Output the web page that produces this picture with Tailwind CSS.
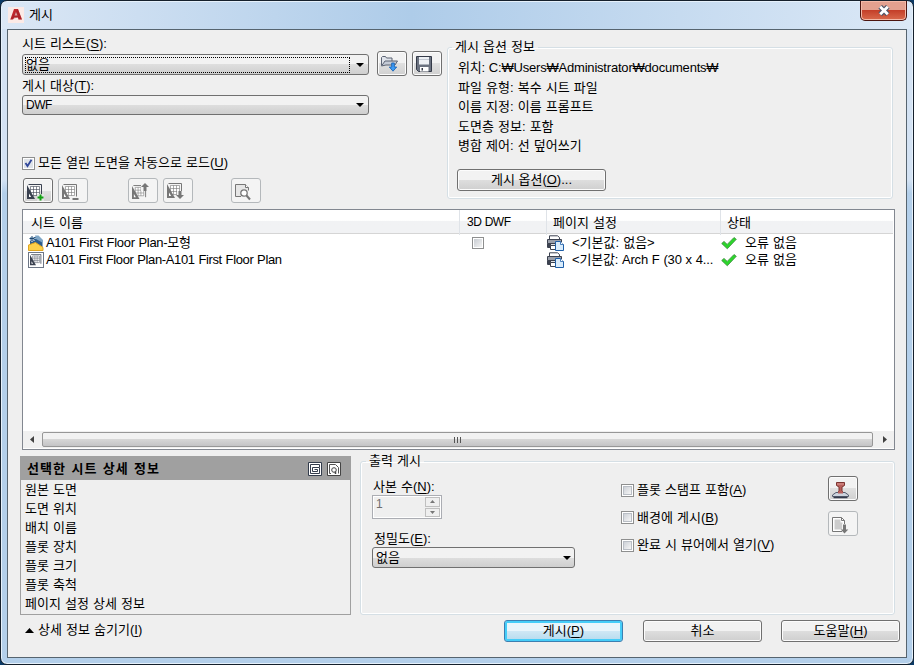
<!DOCTYPE html>
<html lang="ko">
<head>
    <meta charset="UTF-8">
    <meta name="viewport" content="width=device-width, initial-scale=1.0">
    <title>게시</title>
    <script src="https://cdn.jsdelivr.net/npm/@tailwindcss/browser@4"></script>
    <style>
        body {
            font-family: 'Liberation Sans', 'Noto Sans CJK KR', sans-serif;
            word-spacing: 0.5px;
        }
        u {
            text-underline-offset: 2px;
            text-decoration-thickness: 1px;
        }
    </style>
</head>
<body class="w-[914px] h-[665px] overflow-hidden bg-[#0b3a66] text-[13px] leading-4 text-black whitespace-nowrap">
    <!-- Shared icons -->
    <svg class="hidden">
        <symbol id="sheet" viewBox="0 0 16 16">
            <path d="M1.500.500h13V13" fill="none" stroke="currentColor" />
            <path d="M3.500 2.500h9v9h-9z" fill="#fff" stroke="currentColor" stroke-width=".6" />
            <path d="M6.500 2.500v9M9.500 2.500v9M3.500 5.500h9M3.500 8.500h9" fill="none" stroke="currentColor" stroke-width=".6" />
            <path d="M0 1v14h8z" fill="currentColor" />
            <path d="M2 9.500v3.500h2.200z" fill="#fff" />
        </symbol>
        <symbol id="printer" viewBox="0 0 17 16">
            <path d="M2.500 5V.8h8l2 1.700V5" fill="#fff" stroke="#3c4250" />
            <path d="M.500 4.500h14v4H.500z" fill="#9a9faa" stroke="#3c4250" />
            <path d="M.500 8.500h12v4H.500z" fill="#dfe2e7" stroke="#3c4250" />
            <path d="M1 9h3v3H1z" fill="#3c4250" />
            <path d="M3.500 10.500h6v4h-6z" fill="#fff" stroke="#3c4250" />
            <path d="M8.500 6.500h5l3 3v6h-8z" fill="#d9ecfc" stroke="#1f5fa8" />
            <path d="M13.500 6.500v3h3" fill="#fff" stroke="#1f5fa8" stroke-width=".8" />
        </symbol>
        <symbol id="tick" viewBox="0 0 16 14">
            <path d="M.7 7.500L3 5.400l3.200 3L13 1.500l2.300 1.800L6.300 12.800z" fill="#2bd62b" stroke="#3c8a3c" stroke-width=".8" />
        </symbol>
        <symbol id="caret" viewBox="0 0 8 4">
            <path d="M0 0h8L4 4z" fill="#000" />
        </symbol>
    </svg>

    <div class="w-full h-full flex flex-col rounded-[7px] border border-[#15202c] bg-gradient-to-b from-[#d3e2f3] from-27% to-[#b3cfea] to-29% shadow-[inset_0_0_0_1px_#e6f1fb] overflow-hidden">
        <!-- Title bar -->
        <header class="h-[27px] shrink-0 m-px mb-0 flex items-start bg-gradient-to-r from-[#dbe7f5] via-[#aecce9] via-45% to-[#dbe8f6]">
            <div class="mt-[5px] ml-[6px] w-4 h-4 bg-[#fbeae6]">
                <svg class="w-4 h-4" viewBox="0 0 16 16">
                    <path d="M6 2h4l4 10.500h-3.500L10 10.500H6.300L5 12.500H2.300z" fill="#c0272d" />
                    <path d="M8 5l1.500 3.500h-3z" fill="#fbeae6" />
                    <path d="M2.300 12.500L10 10.500l.5 2H14L10 2z" fill="#8f1a20" opacity=".35" />
                </svg>
            </div>
            <h1 class="mt-[4px] ml-[5px] leading-[17px]">게시</h1>
            <button class="ml-auto mr-[5px] -mt-px w-[47px] h-[20px] flex items-center justify-center rounded-b-[5px] border border-t-0 border-[#4b1510] bg-gradient-to-b from-[#e3a08f] from-45% via-[#c43f29] via-50% to-[#d9694c] shadow-[inset_0_0_0_1px_#f3b9a8]">
                <svg class="w-[12px] h-[11px]" viewBox="0 0 11 10">
                    <path d="M2 1.500l7 7M9 1.500l-7 7" stroke="#4a5468" stroke-width="4.600" />
                    <path d="M2 1.500l7 7M9 1.500l-7 7" stroke="#fff" stroke-width="2.600" />
                </svg>
            </button>
        </header>

        <!-- Client area -->
        <main class="mx-[6px] h-[629px] shrink-0 border border-[#56646f] bg-[#efefef] pl-[14px] flex flex-col">
            <section class="h-[179px] flex">
                <div class="w-[425px]">
                    <label class="block pt-[6px] leading-[15px]">시트 리스트(<u>S</u>):</label>
                    <div class="h-[25px] flex items-center">
                        <div class="mt-[2px] w-[347px] h-[21px] flex items-center rounded-[3px] border border-[#707070] bg-gradient-to-b from-[#f2f2f2] from-50% via-[#dedede] via-50% to-[#cfcfcf] p-[2px]">
                            <span class="flex-1 h-[16px] border border-dotted border-black leading-[13px]">없음</span>
                            <svg class="w-[8px] h-[4px] ml-[6px] mr-[2px]"><use href="#caret" /></svg>
                        </div>
                        <button class="ml-[8px] w-[30px] h-[25px] pl-[3px] flex items-center rounded-[3px] border border-[#707070] bg-gradient-to-b from-[#f2f2f2] from-50% via-[#e0e0e0] via-50% to-[#d0d0d0] shadow-[inset_0_0_0_1px_#fcfcfc]">
                            <svg class="w-[18px] h-[17px]" viewBox="0 0 18 17">
                                <path d="M.500 10.500V2.500l1-1h3l1 1.500h5.500v3" fill="#dfe3ea" stroke="#5b6373" />
                                <path d="M.500 11l3.500-5h12.500l-2.500 4H5z" fill="#c5cbd6" stroke="#5b6373" />
                                <path d="M10.700 8h2.600v4h2.400L12 16.200 8.300 12h2.400z" fill="#3d9bf5" stroke="#0f5cb0" stroke-width=".8" />
                            </svg>
                        </button>
                        <button class="ml-[5px] w-[30px] h-[25px] pl-[3px] flex items-center rounded-[3px] border border-[#707070] bg-gradient-to-b from-[#f2f2f2] from-50% via-[#e0e0e0] via-50% to-[#d0d0d0] shadow-[inset_0_0_0_1px_#fcfcfc]">
                            <svg class="w-4 h-4" viewBox="0 0 16 16">
                                <path d="M.500.500h15v15h-13l-2-2z" fill="#6b7280" stroke="#343a48" />
                                <path d="M3 1h10v7.500H3z" fill="#eef1f5" />
                                <path d="M3 3.500h10" stroke="#c3c9d3" />
                                <path d="M4 11h8.500v4.500H4z" fill="#fff" />
                                <path d="M5.500 12h1.500v2.500H5.500z" fill="#343a48" />
                            </svg>
                        </button>
                    </div>
                    <label class="block mt-[2px]">게시 대상(<u>T</u>):</label>
                    <div class="mt-px w-[347px] h-[20px] flex items-center justify-between rounded-[3px] border border-[#707070] bg-gradient-to-b from-[#f2f2f2] from-50% via-[#dedede] via-50% to-[#cfcfcf] pl-[3px] pr-[4px]">
                        <span class="text-[12px] tracking-[-0.5px]">DWF</span>
                        <svg class="w-[8px] h-[4px]"><use href="#caret" /></svg>
                    </div>
                    <label class="mt-[40px] flex items-center">
                        <span class="w-[13px] h-[13px] mr-[3px] border border-[#8e8f8f] bg-white p-px">
                            <svg class="w-[9px] h-[9px] bg-[#dfe3e8]" viewBox="0 0 9 9">
                                <path d="M1.500 4l2 3L7.500.800" fill="none" stroke="#31479a" stroke-width="1.800" />
                            </svg>
                        </span>
                        <span>모든 열린 도면을 자동으로 로드(<u>U</u>)</span>
                    </label>
                    <div class="mt-[7px] ml-px flex">
                        <button class="w-[30px] h-[25px] pl-[3px] pt-[3px] rounded-[3px] border border-[#707070] bg-gradient-to-b from-[#f2f2f2] from-50% via-[#e0e0e0] via-50% to-[#d0d0d0] shadow-[inset_0_0_0_1px_#fcfcfc]">
                            <svg class="w-[18px] h-[17px] text-[#3a4150]" viewBox="0 0 18 17">
                                <use href="#sheet" width="16" height="16" />
                                <path d="M10 10h7v7h-7z" fill="#e4e4e4" />
                                <path d="M13.500 10.500v6M10.500 13.500h6" stroke="#12a012" stroke-width="2" />
                            </svg>
                        </button>
                        <button class="ml-[5px] w-[30px] h-[25px] pl-[3px] pt-[3px] rounded-[3px] border border-[#b4b8bb] bg-[#f4f4f4]">
                            <svg class="w-[18px] h-[17px] text-[#777]" viewBox="0 0 18 17">
                                <use href="#sheet" width="16" height="16" />
                                <path d="M9 14.500h8" stroke="#f4f4f4" stroke-width="4" />
                                <path d="M10.500 15h6" stroke="#777" stroke-width="2" />
                            </svg>
                        </button>
                        <button class="ml-[40px] w-[30px] h-[25px] pl-[3px] pt-[3px] rounded-[3px] border border-[#b4b8bb] bg-[#f4f4f4]">
                            <svg class="w-[18px] h-[18px] text-[#777]" viewBox="0 0 18 18">
                                <use href="#sheet" y="2" width="15" height="15" />
                                <path d="M9 0h8v8H9z" fill="#f4f4f4" />
                                <path d="M13 0l4 4h-2.500v4h-3V4H9z" fill="#777" />
                            </svg>
                        </button>
                        <button class="ml-[5px] w-[30px] h-[25px] pl-[3px] pt-[3px] rounded-[3px] border border-[#b4b8bb] bg-[#f4f4f4]">
                            <svg class="w-[18px] h-[18px] text-[#777]" viewBox="0 0 18 18">
                                <use href="#sheet" width="16" height="16" />
                                <path d="M10 8h7v8h-7z" fill="#f4f4f4" />
                                <path d="M13 16l4-4h-2.500V8h-3v4H9z" fill="#777" />
                            </svg>
                        </button>
                        <button class="ml-[38px] w-[30px] h-[25px] pl-[3px] pt-[3px] rounded-[3px] border border-[#b4b8bb] bg-[#f4f4f4]">
                            <svg class="w-[17px] h-[17px]" viewBox="0 0 17 17">
                                <path d="M6 12.500H.500V.500h10l3 3v3" fill="#e6e6e6" stroke="#777" />
                                <path d="M10.500.500v3h3" fill="#fff" stroke="#777" />
                                <circle cx="9" cy="9" r="3.200" fill="#fff" stroke="#777" stroke-width="1.300" />
                                <path d="M11.500 11.500l3.500 4" stroke="#777" stroke-width="2" />
                            </svg>
                        </button>
                    </div>
                </div>

                <fieldset class="mt-[9px] w-[446px] h-[160px] rounded-[3px] border border-[#d5dfe5] shadow-[inset_0_0_0_1px_#fff]">
                    <legend class="ml-[4px] px-[3px]">게시 옵션 정보</legend>
                    <div class="pl-[10px] mt-[3px] leading-[19.500px]">
                        <p class="tracking-[-0.2px]">위치: C:₩Users₩Administrator₩documents₩</p>
                        <p>파일 유형: 복수 시트 파일</p>
                        <p>이름 지정: 이름 프롬프트</p>
                        <p>도면층 정보: 포함</p>
                        <p>병합 제어: 선 덮어쓰기</p>
                    </div>
                    <button class="mt-[13px] ml-[9px] w-[149px] h-[22px] rounded-[3px] border border-[#707070] bg-gradient-to-b from-[#f2f2f2] from-50% via-[#dedede] via-50% to-[#cfcfcf] shadow-[inset_0_0_0_1px_#fcfcfc]">게시 옵션(<u>O</u>)...</button>
                </fieldset>
            </section>

            <!-- Sheet list -->
            <section class="w-[873px] h-[241px] flex flex-col border border-[#828790] bg-white">
                <div class="h-[24px] mr-px grid grid-cols-[437px_87px_174px_1fr] leading-[25px] border-b border-[#d5d5d5] bg-gradient-to-b from-white from-45% to-[#f1f2f4] to-50%">
                    <div class="pl-[8px] border-r border-[#dfe3e8]">시트 이름</div>
                    <div class="pl-[7px] border-r border-[#dfe3e8] text-[12px] tracking-[-0.5px]">3D DWF</div>
                    <div class="pl-[6px] border-r border-[#dfe3e8]">페이지 설정</div>
                    <div class="pl-[6px]">상태</div>
                </div>
                <div class="flex-1">
                    <div class="h-[17px] grid grid-cols-[437px_87px_174px_1fr]">
                        <div class="pl-[5px] flex items-center">
                            <svg class="w-4 h-4 mr-[2px] mt-px" viewBox="0 0 16 16">
                                <path d="M2 2h8l4.500 4v9H2z" fill="#2c5d8c" />
                                <path d="M7 .500h3.500l4.500 4.500v3L8 4z" fill="#7fa6c6" />
                                <path d="M4 0v7M.500 3.500h7M1.500 1l5 5M6.500 1l-5 5" stroke="#fff" />
                                <path d="M4 1v5M1.500 3.500h5" stroke="#1b4670" />
                                <path d="M.500 10l7-2.500 7.500 5v3H.500z" fill="#fbd04a" stroke="#e0a520" />
                            </svg>
                            <span class="tracking-[-0.3px]">A101 First Floor Plan-모형</span>
                        </div>
                        <div class="pl-[12px] flex items-center">
                            <span class="w-[12px] h-[12px] mt-px border border-[#8e8f8f] bg-white p-px"><span class="block w-full h-full bg-gradient-to-br from-[#c8ccd2] to-[#f4f4f4]"></span></span>
                        </div>
                        <div class="flex items-center">
                            <svg class="w-[17px] h-4 mr-[8px] mt-px"><use href="#printer" /></svg>
                            <span>&lt;기본값: 없음&gt;</span>
                        </div>
                        <div class="flex items-center">
                            <svg class="w-4 h-[14px] mr-[8px] mt-px"><use href="#tick" /></svg>
                            <span>오류 없음</span>
                        </div>
                    </div>
                    <div class="h-[17px] grid grid-cols-[437px_87px_174px_1fr]">
                        <div class="pl-[5px] flex items-center">
                            <span class="w-4 h-4 mr-[2px] mt-px border border-[#6d7686] p-px text-[#3a4150]"><svg class="w-3 h-3"><use href="#sheet" /></svg></span>
                            <span class="tracking-[-0.37px]">A101 First Floor Plan-A101 First Floor Plan</span>
                        </div>
                        <div></div>
                        <div class="flex items-center">
                            <svg class="w-[17px] h-4 mr-[8px] mt-px"><use href="#printer" /></svg>
                            <span class="tracking-[-0.2px]">&lt;기본값: Arch F (30 x 4...</span>
                        </div>
                        <div class="flex items-center">
                            <svg class="w-4 h-[14px] mr-[8px] mt-px"><use href="#tick" /></svg>
                            <span>오류 없음</span>
                        </div>
                    </div>
                </div>
                <div class="h-[17px] mb-px flex items-center bg-[#f0f0f0]">
                    <svg class="w-[4px] h-[7px] ml-[7px] mr-[8px]" viewBox="0 0 4 7"><path d="M4 0v7L0 3.500z" fill="#404040" /></svg>
                    <div class="w-[831px] h-[15px] flex items-center justify-center gap-[2px] rounded-[2px] border border-[#979797] bg-gradient-to-b from-[#f2f2f2] from-45% via-[#d6d6d6] via-50% to-[#c4c4c6]">
                        <i class="w-px h-[6px] bg-[#555]"></i>
                        <i class="w-px h-[6px] bg-[#555]"></i>
                        <i class="w-px h-[6px] bg-[#555]"></i>
                    </div>
                    <svg class="w-[4px] h-[7px] ml-[10px]" viewBox="0 0 4 7"><path d="M0 0v7l4-3.500z" fill="#404040" /></svg>
                </div>
            </section>

            <!-- Details and output -->
            <section class="h-[165px] flex">
                <div class="-ml-[2px] mt-[6px] w-[331px] h-[159px] border border-[#a0a0a0]">
                    <div class="h-[23px] pl-[6px] pr-[9px] flex items-center bg-[#a0a0a0]">
                        <h2 class="font-bold tracking-[1.1px]">선택한 시트 상세 정보</h2>
                        <svg class="ml-auto w-[14px] h-[14px]" viewBox="0 0 14 14">
                            <path d="M.500.500h13v13H.500z" fill="#fff" stroke="#333c4c" />
                            <path d="M11.500 5v-2.500h-9v9h9v-6h-7v4h5v-2h-3" fill="none" stroke="#333c4c" />
                        </svg>
                        <svg class="ml-[5px] w-[14px] h-[14px]" viewBox="0 0 14 14">
                            <path d="M.500.500h13v13H.500z" fill="#fff" stroke="#444" />
                            <path d="M4 11.500H2.500v-9h6l3 3v6" fill="none" stroke="#555" />
                            <circle cx="7" cy="8" r="2.300" fill="#fff" stroke="#444" />
                            <path d="M8.500 9.500v2.500" stroke="#444" stroke-width="1.500" />
                        </svg>
                    </div>
                    <ul class="pl-[4px] leading-[19px]">
                        <li>원본 도면</li>
                        <li>도면 위치</li>
                        <li>배치 이름</li>
                        <li>플롯 장치</li>
                        <li>플롯 크기</li>
                        <li>플롯 축척</li>
                        <li>페이지 설정 상세 정보</li>
                    </ul>
                </div>

                <fieldset class="ml-[9px] mt-[3px] w-[535px] h-[162px] rounded-[3px] border border-[#d5dfe5] shadow-[inset_0_0_0_1px_#fff]">
                    <legend class="ml-[5px] px-[3px]">출력 게시</legend>
                    <div class="flex">
                        <div class="ml-[11px] w-[249px] pt-[9px]">
                            <label class="block leading-[17px] pl-px">사본 수(<u>N</u>):</label>
                            <div class="w-[70px] h-[24px] flex border border-[#abadb3] bg-[#efefef] p-px shadow-[inset_0_0_0_1px_#fff]">
                                <span class="flex-1 pl-[2px] leading-[14px] text-[12px] text-[#6d6d6d]">1</span>
                                <div class="w-[15px] flex flex-col gap-px">
                                    <span class="flex-1 flex items-center justify-center border border-[#bfbfbf]"><svg class="w-[5px] h-[3px]" viewBox="0 0 5 3"><path d="M0 3h5L2.500 0z" fill="#777" /></svg></span>
                                    <span class="flex-1 flex items-center justify-center border border-[#bfbfbf]"><svg class="w-[5px] h-[3px]" viewBox="0 0 5 3"><path d="M0 0h5L2.500 3z" fill="#777" /></svg></span>
                                </div>
                            </div>
                            <label class="block mt-[11px] leading-[17px] pl-[2px]">정밀도(<u>E</u>):</label>
                            <div class="w-[203px] h-[21px] flex items-center justify-between rounded-[3px] border border-[#707070] bg-gradient-to-b from-[#f2f2f2] from-50% via-[#dedede] via-50% to-[#cfcfcf] pl-[3px] pr-[3px]">
                                <span>없음</span>
                                <svg class="w-[8px] h-[4px]"><use href="#caret" /></svg>
                            </div>
                        </div>
                        <div class="w-[207px] pt-[13px] flex flex-col gap-[11.500px]">
                            <label class="flex items-center">
                                <span class="w-[13px] h-[13px] mr-[3px] border border-[#8e8f8f] bg-white p-px"><span class="block w-full h-full border border-[#b9bec5] bg-gradient-to-br from-[#cdd1d7] to-[#f6f6f6]"></span></span>
                                <span>플롯 스탬프 포함(<u>A</u>)</span>
                            </label>
                            <label class="flex items-center">
                                <span class="w-[13px] h-[13px] mr-[3px] border border-[#8e8f8f] bg-white p-px"><span class="block w-full h-full border border-[#b9bec5] bg-gradient-to-br from-[#cdd1d7] to-[#f6f6f6]"></span></span>
                                <span>배경에 게시(<u>B</u>)</span>
                            </label>
                            <label class="flex items-center">
                                <span class="w-[13px] h-[13px] mr-[3px] border border-[#8e8f8f] bg-white p-px"><span class="block w-full h-full border border-[#b9bec5] bg-gradient-to-br from-[#cdd1d7] to-[#f6f6f6]"></span></span>
                                <span>완료 시 뷰어에서 열기(<u>V</u>)</span>
                            </label>
                        </div>
                        <div class="pt-[7px] flex flex-col gap-[10px]">
                            <button class="w-[30px] h-[25px] pl-[3px] pt-[3px] rounded-[3px] border border-[#707070] bg-gradient-to-b from-[#f2f2f2] from-50% via-[#e0e0e0] via-50% to-[#d0d0d0] shadow-[inset_0_0_0_1px_#fcfcfc]">
                                <svg class="w-[17px] h-[17px]" viewBox="0 0 17 17">
                                    <path d="M4.500.500h8v3l-2.500 1.500v4l2 2H5l2-2V5L4.500 3.500z" fill="#b8605c" stroke="#7c3431" />
                                    <path d="M5 2h7" stroke="#dd9a96" />
                                    <path d="M4 10.500h9l3.500 2.500v1.500H.500V13z" fill="#cdd4de" stroke="#555d6d" />
                                    <path d="M6 9.500h5v2H6z" fill="#b8605c" />
                                    <path d="M1.500 15.500h14" stroke="#343b4c" stroke-width="1.500" />
                                </svg>
                            </button>
                            <button class="w-[30px] h-[25px] pl-[3px] pt-[3px] rounded-[3px] border border-[#b4b8bb] bg-[#f4f4f4]">
                                <svg class="w-[17px] h-[17px]" viewBox="0 0 17 17">
                                    <path d="M.500.500h9l3 3v11H.500z" fill="#fff" stroke="#777" />
                                    <path d="M2.500 2.500h6v3h2v7h-8z" fill="#ccc" />
                                    <path d="M9.500.500v3h3" fill="none" stroke="#777" />
                                    <path d="M10 7h5v9h-5z" fill="#f4f4f4" />
                                    <path d="M12.500 16.500l3.800-4H14V7.500h-3v5H8.700z" fill="#777" />
                                </svg>
                            </button>
                        </div>
                    </div>
                </fieldset>
            </section>

            <!-- Footer buttons -->
            <footer class="flex pt-[5px]">
                <div class="w-[482px] pl-[3px] pt-[2px] flex items-start">
                    <svg class="w-[9px] h-[5px] mt-[6px] mr-[4px]" viewBox="0 0 9 5"><path d="M0 5h9L4.500 0z" fill="#000" /></svg>
                    <span>상세 정보 숨기기(<u>I</u>)</span>
                </div>
                <button class="w-[119px] h-[22px] rounded-[3px] border border-[#3c7fb1] bg-gradient-to-b from-[#e9f5fb] from-50% via-[#cfe8f5] via-50% to-[#b5daee] shadow-[inset_0_0_0_2px_#45cdf8]">게시(<u>P</u>)</button>
                <button class="ml-[20px] w-[119px] h-[22px] rounded-[3px] border border-[#707070] bg-gradient-to-b from-[#f2f2f2] from-50% via-[#dedede] via-50% to-[#cfcfcf] shadow-[inset_0_0_0_1px_#fcfcfc]">취소</button>
                <button class="ml-[19px] w-[119px] h-[22px] rounded-[3px] border border-[#707070] bg-gradient-to-b from-[#f2f2f2] from-50% via-[#dedede] via-50% to-[#cfcfcf] shadow-[inset_0_0_0_1px_#fcfcfc]">도움말(<u>H</u>)</button>
            </footer>
        </main>
    </div>
</body>
</html>
